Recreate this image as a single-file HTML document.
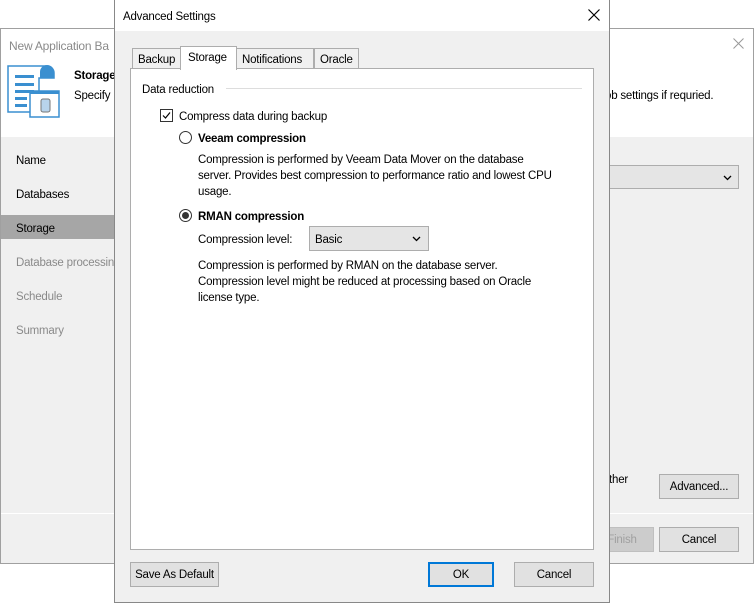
<!DOCTYPE html>
<html><head><style>
*{box-sizing:border-box;margin:0;padding:0}
body{width:754px;height:603px;background:#fff;position:relative;overflow:hidden;font-family:"Liberation Sans",sans-serif;font-size:11.5px;letter-spacing:-0.2px;color:#000}
.a{position:absolute;white-space:nowrap}
.t{margin-top:2px}
.btn{position:absolute;background:#e1e1e1;border:1px solid #adadad;text-align:center;line-height:24px}
.g{color:#8a8a8a}
</style></head><body>
<div class="a" style="left:0;top:28px;width:754px;height:536px;border:1px solid #a0a0a0;background:#f0f0f0"></div>
<div class="a" style="left:1px;top:29px;width:752px;height:108px;background:#fff"></div>
<div class="a g t" style="left:9px;top:37px;font-size:12px">New Application Ba</div>
<svg class="a" style="left:733px;top:38px" width="11" height="11"><path d="M0.5 0.5L10.5 10.5M10.5 0.5L0.5 10.5" stroke="#999" stroke-width="1"/></svg>
<svg class="a" style="left:6px;top:64px" width="56" height="56" viewBox="0 0 56 56">
<path d="M2 2 H41 a7 7 0 0 1 7 7 V14 H33 V48 H2 Z" fill="#fff" stroke="#3a8fd0" stroke-width="1.5"/>
<path d="M34 14 V8 a7 7 0 0 1 14 0 V14 Z" fill="#3a8fd0"/>
<rect x="9" y="11" width="19" height="3" fill="#3a8fd0"/><rect x="9" y="19" width="19" height="3" fill="#3a8fd0"/><rect x="9" y="26" width="19" height="3" fill="#3a8fd0"/><rect x="9" y="33" width="12" height="3" fill="#3a8fd0"/><rect x="9" y="40" width="12" height="3" fill="#3a8fd0"/>
<rect x="24" y="27" width="29" height="26" fill="#fff" stroke="#3a8fd0" stroke-width="1.5"/>
<rect x="24" y="27" width="29" height="3" fill="#3a8fd0"/>
<rect x="35" y="35" width="9" height="13" rx="2" fill="#b8d4ec" stroke="#777"/>
</svg>
<div class="a t" style="left:74px;top:68px;font-weight:bold">Storage</div>
<div class="a t" style="left:74px;top:88px">Specify</div>
<div class="a t" style="left:605px;top:88px">ob settings if requried.</div>
<div class="a" style="left:1px;top:215px;width:113px;height:24px;background:#a6a6a6"></div>
<div class="a t" style="left:16px;top:153px">Name</div>
<div class="a t" style="left:16px;top:187px">Databases</div>
<div class="a t" style="left:16px;top:221px">Storage</div>
<div class="a g t" style="left:16px;top:255px">Database processing</div>
<div class="a g t" style="left:16px;top:289px">Schedule</div>
<div class="a g t" style="left:16px;top:323px">Summary</div>
<div class="a" style="left:600px;top:165px;width:139px;height:24px;border:1px solid #adadad;background:#e5e5e5"></div>
<svg class="a" style="left:723px;top:175px" width="9" height="6"><path d="M1 1L4.5 4.5L8 1" stroke="#000" stroke-width="1.3" fill="none"/></svg>
<div class="a t" style="left:609px;top:472px">ther</div>
<div class="btn" style="left:659px;top:474px;width:80px;height:25px">Advanced...</div>
<div class="a" style="left:1px;top:513px;width:752px;height:1px;background:#fff"></div>
<div class="btn" style="left:590px;top:527px;width:64px;height:25px;background:#ccc;border-color:#bfbfbf;color:#a0a0a0">Finish</div>
<div class="btn" style="left:659px;top:527px;width:80px;height:25px">Cancel</div>

<div class="a" style="left:114px;top:0;width:496px;height:603px;border:1px solid #888;background:#f0f0f0"></div>
<div class="a" style="left:115px;top:0;width:494px;height:31px;background:#fff"></div>
<div class="a t" style="left:123px;top:9px">Advanced Settings</div>
<svg class="a" style="left:588px;top:9px" width="12" height="12"><path d="M0.5 0.5L11.5 11.5M11.5 0.5L0.5 11.5" stroke="#000" stroke-width="1.2"/></svg>
<div class="a" style="left:130px;top:68px;width:464px;height:482px;background:#fff;border:1px solid #adadad"></div>
<div class="a" style="left:132px;top:48px;width:49px;height:21px;border:1px solid #adadad;background:#f0f0f0;padding:5px 0 0 5px">Backup</div>
<div class="a" style="left:236px;top:48px;width:78px;height:21px;border:1px solid #adadad;background:#f0f0f0;padding:5px 0 0 5px">Notifications</div>
<div class="a" style="left:314px;top:48px;width:45px;height:21px;border:1px solid #adadad;background:#f0f0f0;padding:5px 0 0 5px">Oracle</div>
<div class="a" style="left:180px;top:46px;width:57px;height:24px;border:1px solid #adadad;border-bottom:none;background:#fff;padding:5px 0 0 7px">Storage</div>
<div class="a t" style="left:142px;top:82px">Data reduction</div>
<div class="a" style="left:226px;top:88px;width:356px;height:1px;background:#ddd"></div>
<div class="a" style="left:160px;top:109px;width:13px;height:13px;border:1px solid #333"><svg width="11" height="11" style="display:block"><path d="M2 5.5L4.5 8L9 2.5" stroke="#000" stroke-width="1.2" fill="none"/></svg></div>
<div class="a t" style="left:179px;top:109px">Compress data during backup</div>
<div class="a" style="left:179px;top:131px;width:13px;height:13px;border:1px solid #333;border-radius:50%"></div>
<div class="a t" style="left:198px;top:131px;font-weight:bold">Veeam compression</div>
<div class="a t" style="left:198px;top:150px;line-height:16px;width:390px">Compression is performed by Veeam Data Mover on the database<br>server. Provides best compression to performance ratio and lowest CPU<br>usage.</div>
<div class="a" style="left:179px;top:209px;width:13px;height:13px;border:1px solid #333;border-radius:50%"><div style="margin:2px;width:7px;height:7px;border-radius:50%;background:#333"></div></div>
<div class="a t" style="left:198px;top:209px;font-weight:bold">RMAN compression</div>
<div class="a t" style="left:198px;top:232px">Compression level:</div>
<div class="a" style="left:309px;top:226px;width:120px;height:25px;border:1px solid #adadad;background:#e5e5e5;padding:7px 0 0 5px">Basic</div>
<svg class="a" style="left:412px;top:236px" width="9" height="6"><path d="M1 1L4.5 4.5L8 1" stroke="#000" stroke-width="1.3" fill="none"/></svg>
<div class="a t" style="left:198px;top:256px;line-height:16px;width:390px">Compression is performed by RMAN on the database server.<br>Compression level might be reduced at processing based on Oracle<br>license type.</div>
<div class="btn" style="left:130px;top:562px;width:89px;height:25px">Save As Default</div>
<div class="btn" style="left:428px;top:562px;width:66px;height:25px;border:2px solid #0078d7;line-height:22px">OK</div>
<div class="btn" style="left:514px;top:562px;width:80px;height:25px">Cancel</div>
</body></html>
